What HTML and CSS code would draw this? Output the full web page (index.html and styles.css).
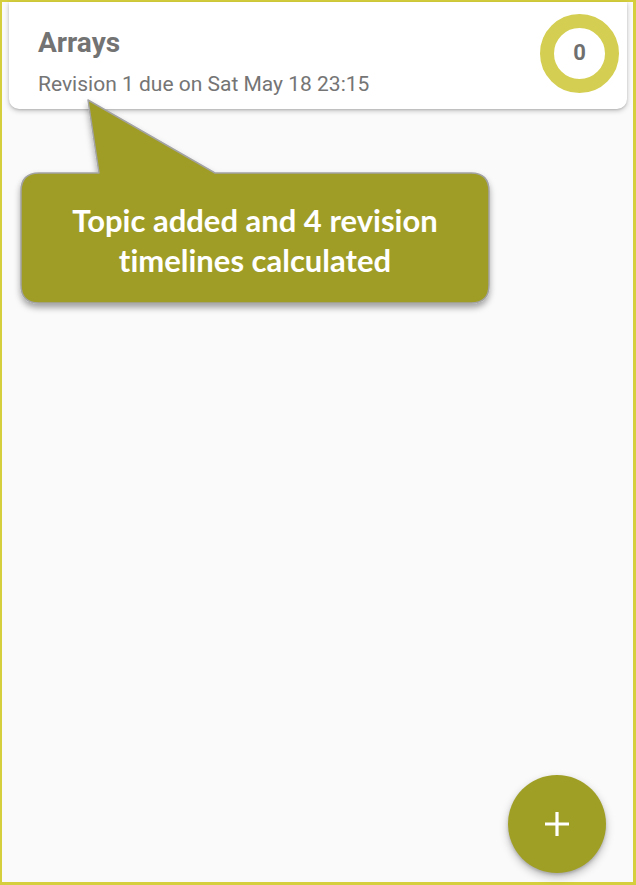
FILE: index.html
```html
<!DOCTYPE html>
<html>
<head>
<meta charset="utf-8">
<link rel="stylesheet" href="styles.css">
</head>
<body>
<div class="screen">
  <div class="card">
    <div class="card-text">
      <div class="title">Arrays</div>
      <div class="subtitle">Revision 1 due on Sat May 18 23:15</div>
    </div>
    <div class="ring"><span>0</span></div>
  </div>

  <div class="callout">
    <svg class="callout-shape" width="500" height="320" viewBox="0 0 500 320">
      <defs>
        <filter id="sh" x="-10%" y="-10%" width="120%" height="130%">
          <feDropShadow dx="0" dy="4" stdDeviation="3" flood-color="#000" flood-opacity="0.35"/>
        </filter>
      </defs>
      <path filter="url(#sh)" d="M88 100 L215 173 L471 173 Q489 173 489 191 L489 285 Q489 303 471 303 L39 303 Q21 303 21 285 L21 191 Q21 173 39 173 L99 173 Z" fill="#a09d25" stroke="#a3a3a3" stroke-width="1.5" stroke-linejoin="round"/>
    </svg>
    <div class="callout-text">Topic added and 4 revision<br>timelines calculated</div>
  </div>

  <button class="fab" aria-label="Add">
    <svg width="28" height="28" viewBox="0 0 28 28"><path d="M14 2 V26 M2 14 H26" stroke="#fff" stroke-width="3.2"/></svg>
  </button>
</div>
</body>
</html>
```

FILE: styles.css
```css
html, body {
  margin: 0;
  padding: 0;
}
body {
  width: 636px;
  height: 885px;
  overflow: hidden;
}
.screen {
  position: relative;
  box-sizing: border-box;
  width: 636px;
  height: 885px;
  background: #fafafa;
  border-style: solid;
  border-color: #d5cf3d;
  border-width: 2px 3px 3px 2px;
  font-family: Roboto, "Liberation Sans", sans-serif;
}
.card {
  margin: 0 6px 0 7px;
  height: 107px;
  box-sizing: border-box;
  background: #fff;
  border-radius: 0 0 10px 10px;
  box-shadow: 0 2px 5px rgba(0,0,0,0.22), 0 1px 2px rgba(0,0,0,0.12);
  display: flex;
  align-items: center;
  justify-content: space-between;
  padding: 0 8px 4px 29px;
}
.card-text {
  display: flex;
  flex-direction: column;
  gap: 13px;
  padding-top: 15px;
}
.title {
  font-weight: 700;
  font-size: 28px;
  color: #737373;
  line-height: 32px;
}
.subtitle {
  font-size: 21px;
  color: #757575;
  line-height: 24px;
}
.ring {
  width: 79px;
  height: 79px;
  box-sizing: border-box;
  border-radius: 50%;
  border: 14px solid #d4cf52;
  background: #fff;
  display: flex;
  align-items: center;
  justify-content: center;
  font-weight: 700;
  font-size: 22px;
  color: #6f6f6f;
  padding-bottom: 2px;
}
.callout {
  position: absolute;
  left: -2px;
  top: -2px;
  width: 500px;
  height: 320px;
}
.callout-shape {
  position: absolute;
  left: 0;
  top: 0;
  width: 500px;
  height: 320px;
}
.callout-text {
  position: absolute;
  left: 21px;
  top: 173px;
  width: 468px;
  height: 130px;
  display: flex;
  align-items: center;
  justify-content: center;
  text-align: center;
  color: #fff;
  font-family: Lato, "Open Sans", sans-serif;
  font-weight: 700;
  font-size: 31px;
  line-height: 40px;
  font-variant-ligatures: none;
  padding-top: 4px;
  box-sizing: border-box;
}
.fab {
  position: absolute;
  left: 506px;
  top: 773px;
  width: 98px;
  height: 98px;
  border-radius: 50%;
  border: none;
  background: #a09f25;
  box-shadow: 0 4px 8px rgba(0,0,0,0.25), 0 2px 3px rgba(0,0,0,0.15);
  display: flex;
  align-items: center;
  justify-content: center;
  padding: 0;
}
```
